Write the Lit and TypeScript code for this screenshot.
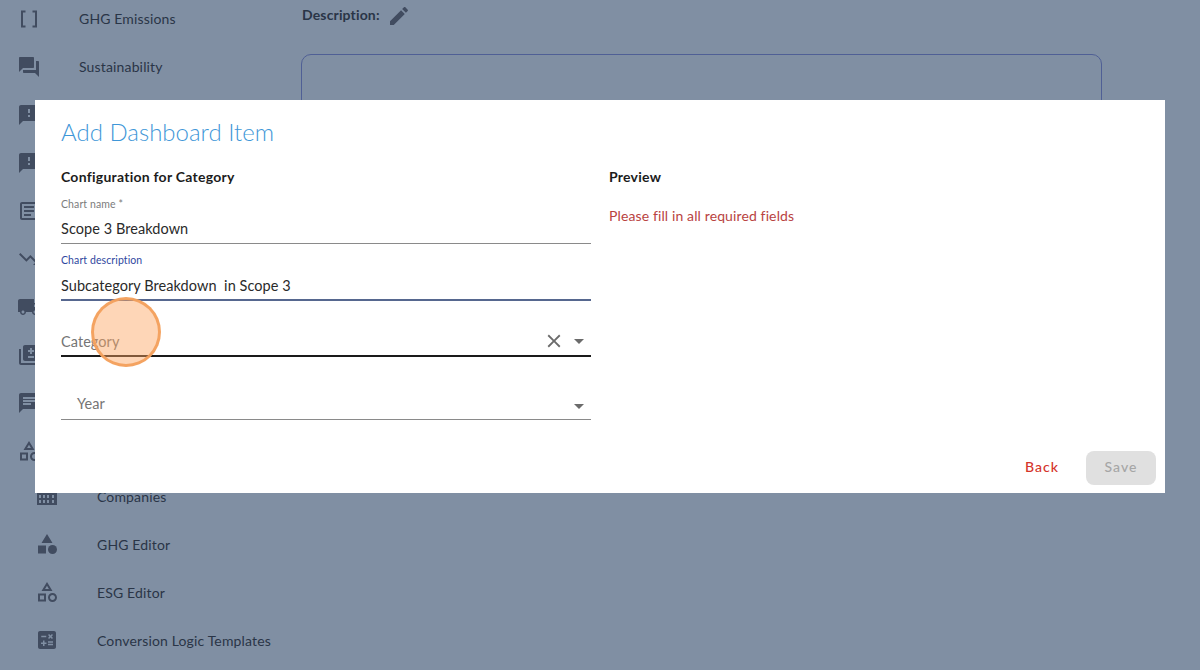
import { LitElement, html, css, svg } from "lit";
import { customElement } from "lit/decorators.js";

const P: Record<string, unknown> = {
  brackets: svg`<path d="M8.5 4.5H5v15h3.5M15.5 4.5H19v15h-3.5" fill="none" stroke="currentColor" stroke-width="2"/>`,
  forum: svg`<path d="M21 6h-2v9H6v2c0 .55.45 1 1 1h11l4 4V7c0-.55-.45-1-1-1zm-4 6V3c0-.55-.45-1-1-1H3c-.55 0-1 .45-1 1v14l4-4h10c.55 0 1-.45 1-1z"/>`,
  failed: svg`<path d="M20 2H4c-1.1 0-1.99.9-1.99 2L2 22l4-4h14c1.1 0 2-.9 2-2V4c0-1.1-.9-2-2-2zm-7 12h-2v-2h2v2zm0-4h-2V6h2v4z"/>`,
  article: svg`<path d="M19 5v14H5V5h14m0-2H5c-1.1 0-2 .9-2 2v14c0 1.1.9 2 2 2h14c1.1 0 2-.9 2-2V5c0-1.1-.9-2-2-2zM14 17H7v-2h7v2zm3-4H7v-2h10v2zm0-4H7V7h10v2z"/>`,
  down: svg`<path d="M16 18l2.29-2.29-4.88-4.88-4 4L2 7.41 3.41 6l6 6 4-4 6.3 6.29L22 12v6z"/>`,
  truck: svg`<path d="M20 8h-3V4H3c-1.1 0-2 .9-2 2v11h2c0 1.66 1.34 3 3 3s3-1.34 3-3h6c0 1.66 1.34 3 3 3s3-1.34 3-3h2v-5l-3-4zM6 18.5c-.83 0-1.5-.67-1.5-1.5s.67-1.5 1.5-1.5 1.5.67 1.5 1.5-.67 1.5-1.5 1.5zm13.5-9l1.96 2.5H17V9.5h2.5zm-1.5 9c-.83 0-1.5-.67-1.5-1.5s.67-1.5 1.5-1.5 1.5.67 1.5 1.5-.67 1.5-1.5 1.5z"/>`,
  library: svg`<path fill-rule="evenodd" d="M4 6H2v14c0 1.1.9 2 2 2h14v-2H4V6zm16-4H8c-1.1 0-2 .9-2 2v12c0 1.1.9 2 2 2h12c1.1 0 2-.9 2-2V4c0-1.1-.9-2-2-2zM13 5h2v2h2v2h-2v2h-2V9h-2V7h2V5zM11 13h6v2h-6z"/>`,
  chat: svg`<path d="M20 2H4c-1.1 0-1.99.9-1.99 2L2 22l4-4h14c1.1 0 2-.9 2-2V4c0-1.1-.9-2-2-2zM6 9h12v2H6V9zm8 5H6v-2h8v2zm4-6H6V6h12v2z"/>`,
  shapes: svg`<path d="M12 2l-5.5 9h11L12 2zm0 3.84L13.93 9h-3.87L12 5.84zM17.5 13c-2.49 0-4.5 2.01-4.5 4.5s2.01 4.5 4.5 4.5 4.5-2.01 4.5-4.5-2.01-4.5-4.5-4.5zm0 7c-1.38 0-2.5-1.12-2.5-2.5s1.12-2.5 2.5-2.5 2.5 1.12 2.5 2.5-1.12 2.5-2.5 2.5zM3 21.5h8v-8H3v8zm2-6h4v4H5v-4z"/>`,
  shapesFilled: svg`<path d="M12 2l-5.5 9h11zM3 13.5h8v8H3z"/><circle cx="17.5" cy="17.5" r="4.5"/>`,
  grid: svg`<path fill-rule="evenodd" d="M2 4h20v17H2zM4 6v3h2V6zm4 0v3h2V6zm4 0v3h2V6zm4 0v3h4V6zM4 11v3h2v-3zm4 0v3h2v-3zm4 0v3h2v-3zm5 0v3h2v-3zM4 16v3h2v-3zm4 0v3h2v-3zm4 0v3h2v-3zm5 0v3h2v-3z"/>`,
  calc: svg`<path d="M19 3H5c-1.1 0-2 .9-2 2v14c0 1.1.9 2 2 2h14c1.1 0 2-.9 2-2V5c0-1.1-.9-2-2-2zm-5.97 4.06L14.09 6l1.41 1.41L16.91 6l1.06 1.06-1.41 1.41 1.41 1.41-1.06 1.06-1.41-1.4-1.41 1.41-1.06-1.06 1.41-1.41-1.41-1.42zm-6.78.66h5v1.5h-5v-1.5zM11.5 16h-2v2H8v-2H6v-1.5h2v-2h1.5v2h2V16zm6.5 1.25h-5v-1.5h5v1.5zm0-2.5h-5v-1.5h5v1.5z"/>`,
  edit: svg`<path d="M3 17.25V21h3.75L17.81 9.94l-3.75-3.75L3 17.25zM20.71 7.04c.39-.39.39-1.02 0-1.41l-2.34-2.34c-.39-.39-1.02-.39-1.41 0l-1.83 1.83 3.75 3.75 1.83-1.83z"/>`,
  close: svg`<path d="M19 6.41L17.59 5 12 10.59 6.41 5 5 6.41 10.59 12 5 17.59 6.41 19 12 13.41 17.59 19 19 17.59 13.41 12z"/>`,
  arrow: svg`<path d="M7 10l5 5 5-5z"/>`,
};

const icon = (n: string) => html`<svg class="icon" viewBox="0 0 24 24" fill="currentColor">${P[n]}</svg>`;

const NAV: { i: string; t: string; sub?: boolean }[] = [
  { i: "brackets", t: "GHG Emissions" },
  { i: "forum", t: "Sustainability" },
  { i: "failed", t: "" },
  { i: "failed", t: "" },
  { i: "article", t: "" },
  { i: "down", t: "" },
  { i: "truck", t: "" },
  { i: "library", t: "" },
  { i: "chat", t: "" },
  { i: "shapes", t: "" },
  { i: "grid", t: "Companies", sub: true },
  { i: "shapesFilled", t: "GHG Editor", sub: true },
  { i: "shapes", t: "ESG Editor", sub: true },
  { i: "calc", t: "Conversion Logic Templates", sub: true },
];

@customElement("app-root")
export class AppRoot extends LitElement {
  static styles = css`
    :host {
      display: block;
      position: relative;
      width: 1200px;
      height: 670px;
      overflow: hidden;
      background: #808fa3;
      font-family: Lato, "Liberation Sans", sans-serif;
      color: #2a3547;
    }
    .page { display: flex; height: 100%; }
    .nav { width: 301px; flex: none; margin-top: -5px; }
    .row {
      height: 48px;
      display: flex;
      align-items: center;
      gap: 38px;
      padding-left: 17px;
      font-size: 14px;
      letter-spacing: 0.15px;
      white-space: nowrap;
    }
    .row span { margin-bottom: 2px; }
    .row.sub { padding-left: 35px; }
    .row.sub span { margin-bottom: 0; }
    .row.first-sub { margin-top: -3px; }
    .row .icon { color: #414c60; }
    .icon { width: 24px; height: 24px; flex: none; display: block; }
    .main { flex: 1; display: flex; flex-direction: column; gap: 24px; }
    .desc-head {
      height: 30px;
      display: flex;
      align-items: center;
      gap: 7px;
      padding-left: 1px;
      font-size: 14px;
      font-weight: 700;
      letter-spacing: 0.15px;
    }
    .desc-head span { margin-bottom: 2px; }
    .desc-head .icon { color: #414c60; margin-top: 1px; }
    .box {
      width: 801px;
      height: 200px;
      box-sizing: border-box;
      border: 1px solid #4f5f95;
      border-radius: 10px;
    }
    .modal {
      position: absolute;
      left: 35px;
      top: 100px;
      width: 1130px;
      height: 393px;
      box-sizing: border-box;
      background: #fff;
      padding: 17px 9px 8px 26px;
      display: flex;
      flex-direction: column;
      color: #1f1f1f;
    }
    h2 {
      margin: 0;
      font-size: 24px;
      line-height: 30px;
      font-weight: 300;
      letter-spacing: 0;
      color: #3f97d8;
    }
    .cols {
      display: grid;
      grid-template-columns: 530px 1fr;
      column-gap: 18px;
      margin-top: 21px;
    }
    h3 {
      margin: 0;
      font-size: 14px;
      line-height: 18px;
      font-weight: 700;
      letter-spacing: 0.25px;
      color: #1c1c1c;
    }
    .error {
      margin-top: 21px;
      font-size: 14px;
      line-height: 18px;
      letter-spacing: 0.12px;
      color: #b9433f;
    }
    .field { display: flex; flex-direction: column; }
    .field label {
      font-size: 10.5px;
      line-height: 14px;
      letter-spacing: 0.1px;
      color: #7c7c7c;
    }
    .name { margin-top: 11px; }
    .chart-desc { margin-top: 9px; }
    .chart-desc label { color: #2f47a0; }
    .value {
      display: flex;
      align-items: center;
      font-size: 14.5px;
      letter-spacing: 0.06px;
      color: #2a2a2a;
      white-space: pre;
    }
    .name .value, .chart-desc .value {
      height: 33px;
      padding-top: 2px;
      box-sizing: border-box;
      border-bottom: 1px solid #8a8a8a;
    }
    .chart-desc .value { height: 34px; padding-top: 5px; border-bottom: 2px solid #56678f; }
    .select {
      height: 30px;
      box-sizing: border-box;
      color: #757575;
    }
    .select span { flex: 1; margin-top: 2px; }
    .select .icon { color: #6b6b6b; }
    .select .x { width: 22px; height: 22px; margin-right: 2px; }
    .category { margin-top: 25px; height: 31px; border-bottom: 2px solid #1a1a1a; }
    .year {
      margin-top: 31px;
      padding-left: 16px;
      border-bottom: 1px solid #8a8a8a;
      height: 32px;
      padding-bottom: 3px;
    }
    .year .icon { margin-top: 8px; }
    .actions {
      margin-top: auto;
      display: flex;
      justify-content: flex-end;
      align-items: center;
      gap: 27px;
    }
    button {
      font: inherit;
      font-size: 14px;
      letter-spacing: 1px;
      border: 0;
      background: none;
      padding: 0 0 3px;
    }
    .back { color: #d5342a; font-weight: 500; letter-spacing: 1px; }
    .save {
      width: 70px;
      height: 34px;
      border-radius: 8px;
      background: #e0e0e0;
      color: #a6a6a6;
      font-weight: 500;
    }
    .spot {
      position: absolute;
      left: 91px;
      top: 297px;
      width: 70px;
      height: 70px;
      box-sizing: border-box;
      border-radius: 50%;
      background: rgba(253, 164, 96, 0.45);
      border: 3px solid rgba(243, 160, 93, 0.95);
    }
  `;

  render() {
    return html`
      <div class="page">
        <nav class="nav">
          ${NAV.map(
            (n, idx) =>
              html`<div class="row ${n.sub ? "sub" : ""} ${idx === 10 ? "first-sub" : ""}">${icon(n.i)}<span>${n.t}</span></div>`
          )}
        </nav>
        <main class="main">
          <div class="desc-head"><span>Description:</span>${icon("edit")}</div>
          <div class="box"></div>
        </main>
      </div>
      <section class="modal">
        <h2>Add Dashboard Item</h2>
        <div class="cols">
          <div>
            <h3>Configuration for Category</h3>
            <div class="field name">
              <label>Chart name *</label>
              <div class="value">Scope 3 Breakdown</div>
            </div>
            <div class="field chart-desc">
              <label>Chart description</label>
              <div class="value">Subcategory Breakdown  in Scope 3</div>
            </div>
            <div class="value select category">
              <span>Category</span>
              <svg class="icon x" viewBox="0 0 24 24" fill="currentColor">${P.close}</svg>
              ${icon("arrow")}
            </div>
            <div class="value select year">
              <span>Year</span>
              ${icon("arrow")}
            </div>
          </div>
          <div>
            <h3>Preview</h3>
            <div class="error">Please fill in all required fields</div>
          </div>
        </div>
        <div class="actions">
          <button class="back">Back</button>
          <button class="save" disabled>Save</button>
        </div>
      </section>
      <div class="spot"></div>
    `;
  }
}
